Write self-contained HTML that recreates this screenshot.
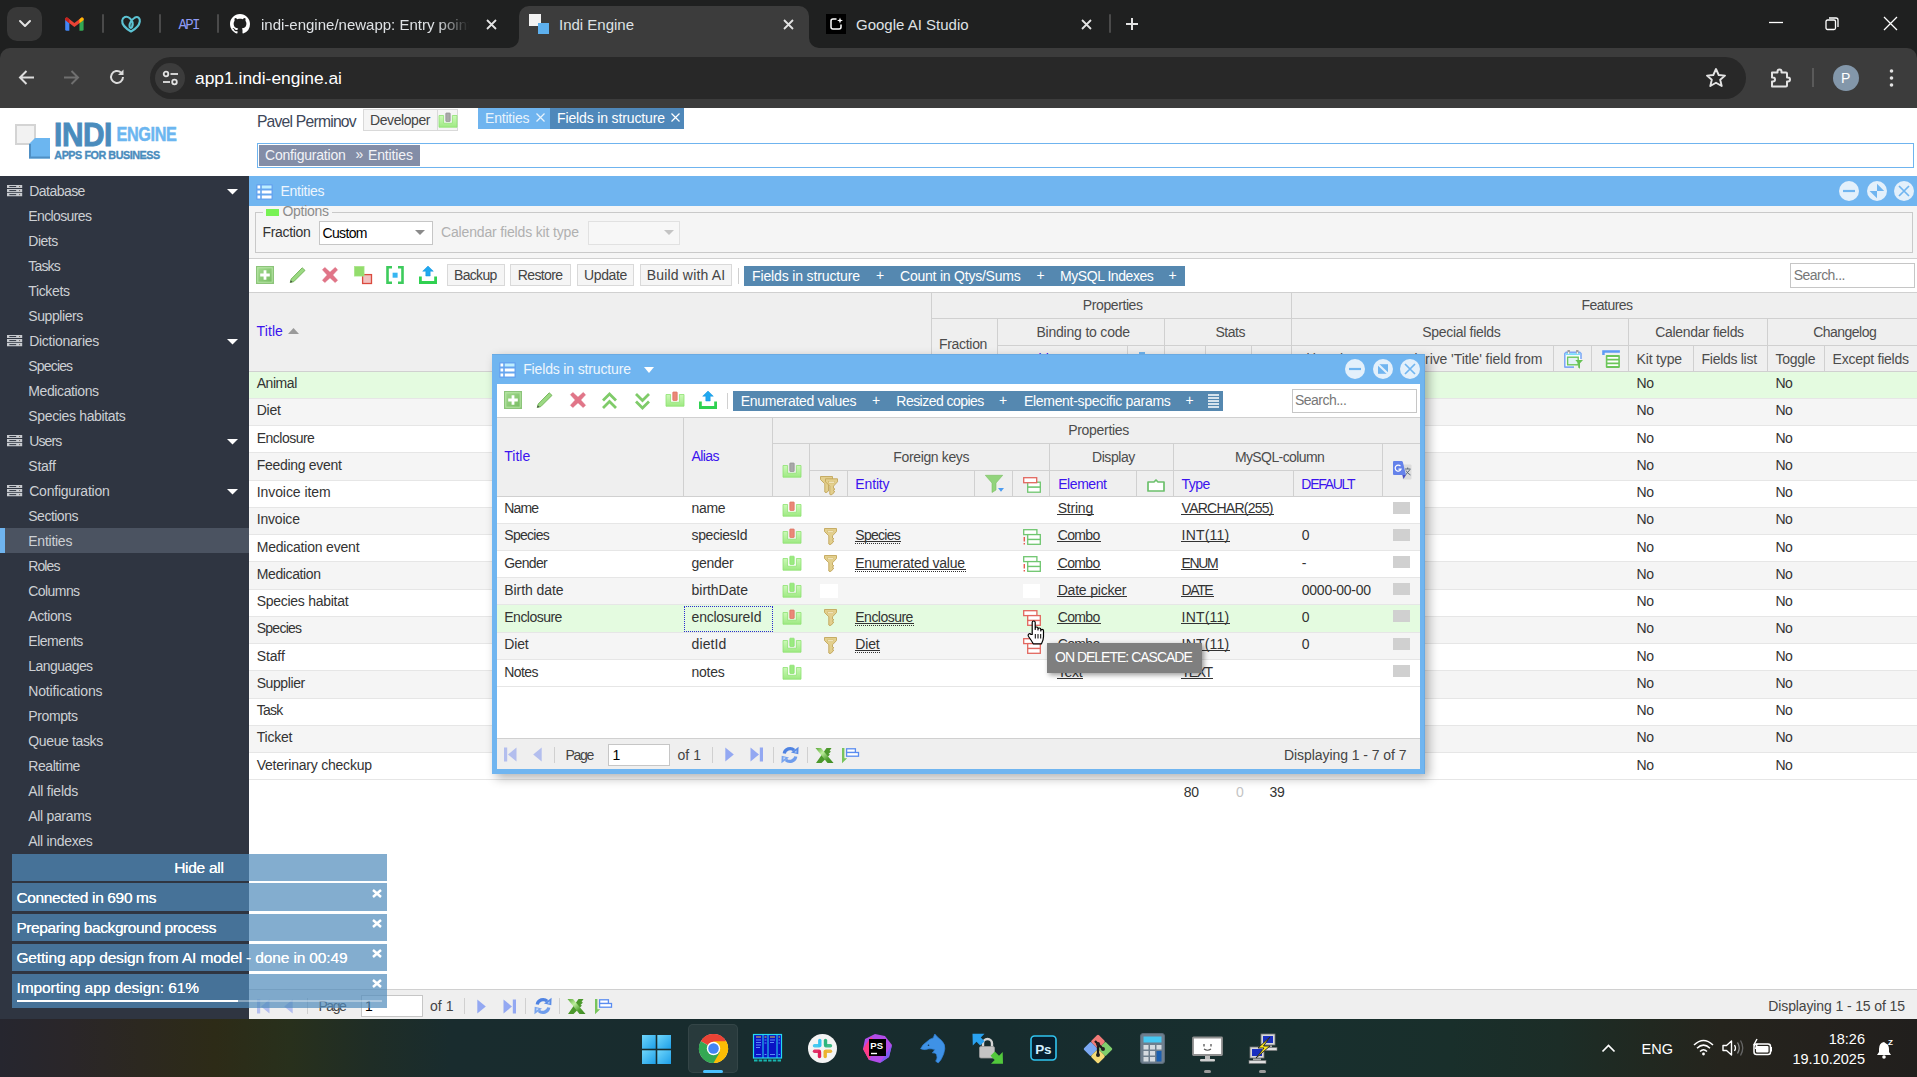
<!DOCTYPE html>
<html lang="en"><head><meta charset="utf-8"><title>Indi Engine</title>
<style>
*{box-sizing:border-box}
html,body{margin:0;padding:0}
body{width:1917px;height:1077px;overflow:hidden;position:relative;background:#fff;font-family:"Liberation Sans",sans-serif;font-size:14px;letter-spacing:-.45px;color:#333}
.a{position:absolute}
.t{position:absolute;white-space:nowrap;line-height:18px;height:18px;font-size:14px}
svg{position:absolute;overflow:visible}
/* chrome */
#chrome{left:0;top:0;width:1917px;height:108px;background:#1f2020;letter-spacing:0}
#chrome .t{color:#dfe2e5;font-size:15px}
#tb{left:0;top:48px;width:1917px;height:60px;background:#3c3c3c;border-radius:10px 10px 0 0}
#url{left:150px;top:57px;width:1596px;height:42px;border-radius:21px;background:#282828}
#acttab{left:519px;top:6px;width:290px;height:43px;background:#3c3c3c;border-radius:10px 10px 0 0}
.vs{position:absolute;width:2px;height:19px;top:14px;background:#4a4a4a;border-radius:1px}
/* sidebar */
#side{left:0;top:176px;width:249px;height:843px;background:#2f3541}
#side .t{color:#cdd0d4}
/* generic */
.btn{position:absolute;background:#f5f5f5;border:1px solid #d9d9d9;height:22px;top:264px}
.hl{position:absolute;height:1px;background:#d0d0d0}
.vl{position:absolute;width:1px;background:#d0d0d0}
.hd{color:#4c4c4c}
.bl{color:#3b14ee}
.u{text-decoration:underline;text-underline-offset:1.500px;text-decoration-thickness:1px}
.ud{border-bottom:1px dotted #333;height:17.300px}
.wt{color:#fff}
</style></head><body>
<svg width="0" height="0" style="left:-10px;top:-10px"><defs>
<linearGradient id="gG" x1="0" y1="0" x2="0" y2="1"><stop offset="0" stop-color="#ccf9b8"/><stop offset="1" stop-color="#9ee982"/></linearGradient>
<linearGradient id="gA" x1="0" y1="0" x2="1" y2="1"><stop offset="0" stop-color="#a6dc92"/><stop offset="1" stop-color="#74b95f"/></linearGradient>
<symbol id="i-grp" viewBox="0 0 15 12" overflow="visible"><path d="M0 1.550H15.200M0 5.600H15.200M0 9.650H15.200" stroke="#c6c9ce" stroke-width="3.100"/><path d="M2.300 1.550H9.200M2.300 5.600H9.200M2.300 9.650H9.200" stroke="#2f3541" stroke-width="1"/><path d="M12.100 1.550H13.100M12.100 5.600H13.100M12.100 9.650H13.100" stroke="#6a5a4a" stroke-width="1"/></symbol>
<symbol id="i-tray" viewBox="0 0 18 17" overflow="visible"><path d="M0 3.500H4.600V11.200H13.400V3.500H18V15.200H0Z" fill="url(#gG)" stroke="#8ee272" stroke-width=".8"/><rect x="6.800" y="1.200" width="4.400" height="8.300" rx=".6" fill="#9aeb80" stroke="#86de6c" stroke-width=".7"/></symbol>
<symbol id="i-tray-red" viewBox="0 0 18 17" overflow="visible"><path d="M0 3.500H4.600V11.200H13.400V3.500H18V15.200H0Z" fill="url(#gG)" stroke="#8ee272" stroke-width=".8"/><rect x="6.800" y="1" width="4.400" height="8.500" rx=".6" fill="#ea8878" stroke="#dd6d5c" stroke-width=".7"/></symbol>
<symbol id="i-tray-gray" viewBox="0 0 18 17" overflow="visible"><path d="M0 3.500H4.600V11.200H13.400V3.500H18V15.200H0Z" fill="url(#gG)" stroke="#8ee272" stroke-width=".8"/><rect x="6.800" y="1" width="4.400" height="8.500" rx=".6" fill="#a9a9a9" stroke="#8e8e8e" stroke-width=".7"/></symbol>
<symbol id="i-add" viewBox="0 0 18 18" overflow="visible"><rect x=".5" y=".5" width="17" height="17" fill="url(#gA)" stroke="#8cc47a" stroke-width="1"/><rect x="1.800" y="1.800" width="14.400" height="14.400" fill="none" stroke="#b9e6a8" stroke-width="1"/><path d="M9 4.200V13.800M4.200 9H13.800" stroke="#fff" stroke-width="2.800"/></symbol>
<symbol id="i-pencil" viewBox="0 0 18 18" overflow="visible"><path d="M1.200 16.600L2.200 13L13.200 1.800L16 4.400L4.800 15.600Z" fill="#9bd982" stroke="#6fb055" stroke-width=".9" stroke-linejoin="round"/><path d="M1.200 16.600L1.800 14.300L3.500 16Z" fill="#444"/></symbol>
<symbol id="i-x" viewBox="0 0 16 16" overflow="visible"><path d="M2.800.5L8 5.300L13.200.5L15.500 2.800L10.700 8L15.500 13.200L13.200 15.500L8 10.700L2.800 15.500L.5 13.200L5.300 8L.5 2.800Z" fill="#e17588" stroke="#d96478" stroke-width=".6" stroke-linejoin="round"/></symbol>
<symbol id="i-copy" viewBox="0 0 18 18" overflow="visible"><rect x="8.600" y="8.600" width="8.900" height="8.900" fill="#f1c1c1" stroke="#db4a3e" stroke-width="1.300"/><rect x=".3" y=".3" width="9.800" height="9.800" fill="#93dd6c" stroke="#a8e58a" stroke-width=".6"/></symbol>
<symbol id="i-brk" viewBox="0 0 18 18" overflow="visible"><path d="M6 1.200H1.500V16.800H6M12 1.200H16.500V16.800H12" fill="none" stroke="#3dcb5c" stroke-width="2.600"/><rect x="6.600" y="6.700" width="5" height="5" fill="#37b6f2"/></symbol>
<symbol id="i-upload" viewBox="0 0 18 18" overflow="visible"><path d="M1.400 10.600V16.500H16.600V10.600" fill="none" stroke="#30d151" stroke-width="2.800"/><path d="M9 0L14.300 5.200H11.200V10H6.800V5.200H3.700Z" fill="#1fa8f0" stroke="#1592dc" stroke-width=".5"/></symbol>
<symbol id="i-up2" viewBox="0 0 15 18" overflow="visible"><path d="M1 8.500L7.500 2L14 8.500M1 16L7.500 9.500L14 16" fill="none" stroke="#7fcb69" stroke-width="2.800" stroke-linejoin="miter"/></symbol>
<symbol id="i-down2" viewBox="0 0 15 18" overflow="visible"><path d="M1 2L7.500 8.500L14 2M1 9.500L7.500 16L14 9.500" fill="none" stroke="#7fcb69" stroke-width="2.800" stroke-linejoin="miter"/></symbol>
<symbol id="i-key" viewBox="0 0 13 17" overflow="visible"><path d="M.5.500H12.500V3.500L8.500 7.800V10L10 10.800L8.500 11.600V12.500L10 13.300L8.500 14.300V15L6 16.700L4.800 16V7.800L.5 3.500Z" fill="#e3cf8d" stroke="#c2a65a" stroke-width=".9" stroke-linejoin="round"/><rect x="3.600" y="3" width="5.800" height="1.700" fill="#fbf5d8" stroke="#cbb162" stroke-width=".5"/></symbol>
<symbol id="i-keys" viewBox="0 0 18 19" overflow="visible"><g transform="translate(0,0)"><path d="M.5.500H12.500V3.500L8.500 7.800V15L6 16.700L4.800 16V7.800L.5 3.500Z" fill="#e3cf8d" stroke="#c2a65a" stroke-width=".9" stroke-linejoin="round"/></g><g transform="translate(5,2.300)"><path d="M.5.500H12.500V3.500L8.500 7.800V10L10 10.800L8.500 11.600V12.500L10 13.300L8.500 14.300V15L6 16.700L4.800 16V7.800L.5 3.500Z" fill="#e3cf8d" stroke="#c2a65a" stroke-width=".9" stroke-linejoin="round"/><rect x="3.600" y="3" width="5.800" height="1.700" fill="#fbf5d8" stroke="#cbb162" stroke-width=".5"/></g></symbol>
<symbol id="i-tree-g" viewBox="0 0 18 16" overflow="visible"><g fill="#fff" stroke="#6fc66f" stroke-width="1.300"><rect x=".7" y=".7" width="13.200" height="4.900"/><rect x="4.700" y="5.600" width="12.600" height="4.900"/><rect x="4.700" y="10.500" width="12.600" height="4.800"/></g><path d="M1.300 8V12.500M1.300 14V15.600" stroke="#e65a50" stroke-width="1.400"/></symbol>
<symbol id="i-tree-r" viewBox="0 0 18 16" overflow="visible"><g fill="#fff" stroke="#e2675f" stroke-width="1.300"><rect x=".7" y=".7" width="13.200" height="4.900"/><rect x="4.700" y="5.600" width="12.600" height="4.900"/><rect x="4.700" y="10.500" width="12.600" height="4.800"/></g></symbol>
<symbol id="i-tree-h" viewBox="0 0 18 16" overflow="visible"><g fill="#fff" stroke="#6fc66f" stroke-width="1.300"><rect x="4.700" y="5.200" width="12.600" height="5"/><rect x="4.700" y="10.200" width="12.600" height="5"/></g><rect x=".7" y=".7" width="13" height="5" fill="#fff" stroke="#e2675f" stroke-width="1.300"/></symbol>
<symbol id="i-filter" viewBox="0 0 19 18" overflow="visible"><path d="M.3.300H17.700L11 8V15L7 17.500V8Z" fill="#92d47c" stroke="#78c060" stroke-width=".6" stroke-linejoin="round"/><path d="M13 13H19L16 16.700Z" fill="#4d9cf0"/></symbol>
<symbol id="i-shape" viewBox="0 0 18 13" overflow="visible"><path d="M1 3H7L9 1L11 3H17V12H1Z" fill="#fff" stroke="#6cc06c" stroke-width="1.700" stroke-linejoin="round"/></symbol>
<symbol id="i-gtr" viewBox="0 0 19 19" overflow="visible"><rect x="9.500" y="3.500" width="9" height="15" rx="1" fill="#dcdcdc"/><path d="M12 8H17.500M14.700 6.500V8M12.500 14L17 8.500M13 9.500Q14.500 12.500 17.500 14" fill="none" stroke="#506070" stroke-width=".9"/><path d="M1 0H8.500Q9.500 0 9.800 1L13 14H1Q0 14 0 13V1Q0 0 1 0Z" fill="#6582ea"/><path d="M9.300 14H13L10.500 18Z" fill="#4a4fc0"/><path d="M7.500 5.200A3 3 0 1 0 8 8.200H5.500" fill="none" stroke="#fff" stroke-width="1.200"/></symbol>
<symbol id="i-first" viewBox="0 0 13 15" overflow="visible"><rect x="0" y=".5" width="3.200" height="14" fill="#b3beee"/><path d="M12.500.5V14.500L4 7.500Z" fill="#b3beee"/></symbol>
<symbol id="i-prev" viewBox="0 0 9 15" overflow="visible"><path d="M8.700.5V14.500L.2 7.500Z" fill="#b3beee"/></symbol>
<symbol id="i-next" viewBox="0 0 9 15" overflow="visible"><path d="M.3.500V14.500L8.800 7.500Z" fill="#93a8f2"/></symbol>
<symbol id="i-last" viewBox="0 0 13 15" overflow="visible"><rect x="9.800" y=".5" width="3.200" height="14" fill="#93a8f2"/><path d="M.5.500V14.500L9 7.500Z" fill="#93a8f2"/></symbol>
<symbol id="i-refresh" viewBox="0 0 18 18" overflow="visible"><path d="M3.200 7.500A6 6 0 0 1 13.200 4.200" fill="none" stroke="#4f83e2" stroke-width="3.200"/><path d="M10 6.600L17.300 8.200L17.600 .8Z" fill="#5a8ce6"/><path d="M13.300 6.200L15.500 6.700L15.600 4.300Z" fill="#b8d3fa"/><path d="M14.800 10.500A6 6 0 0 1 4.800 13.800" fill="none" stroke="#6f9dec" stroke-width="3.200"/><path d="M8 11.400L.7 9.800L.4 17.200Z" fill="#7aa5ee"/><path d="M4.700 11.800L2.500 11.300L2.400 13.700Z" fill="#d0e2fc"/></symbol>
<symbol id="i-excel" viewBox="0 0 18 16" overflow="visible"><linearGradient id="gX" x1="0" y1="0" x2="1" y2="1"><stop offset="0" stop-color="#5aa838"/><stop offset=".35" stop-color="#bdee9c"/><stop offset=".7" stop-color="#4f9e2e"/><stop offset="1" stop-color="#3f8a24"/></linearGradient><path d="M11.500 0H16.500L14.500 3L16 3.500L13.500 6L15 6.500L6.500 15H1Z" fill="#4c982c"/><path d="M.5 0H6L18.500 15H12.500Z" fill="url(#gX)"/></symbol>
<symbol id="i-flag" viewBox="0 0 17 16" overflow="visible"><path d="M0 0H2.400V10.200H5.200L0 15.200Z" fill="#78c45c"/><rect x="4.600" y=".8" width="8.800" height="3.700" fill="#fff" stroke="#5a8cf0" stroke-width="1.300"/><rect x="4.600" y="4.500" width="11.900" height="3.700" fill="#fff" stroke="#5a8cf0" stroke-width="1.300"/></symbol>
<symbol id="i-list" viewBox="0 0 17 16" overflow="visible"><rect x="0" y="0" width="17" height="16" rx="1.500" fill="#5e97ee" opacity=".55"/><path d="M1.500 3H4.200M1.500 8H4.200M1.500 13H4.200" stroke="#fff" stroke-width="3"/><path d="M5.800 3H15.500" stroke="#bfeeff" stroke-width="3"/><path d="M5.800 8H15.500M5.800 13H15.500" stroke="#fff" stroke-width="3"/></symbol>
<symbol id="i-cmin" viewBox="0 0 20 20" overflow="visible"><circle cx="10" cy="10" r="10" fill="#e3f0fb"/><path d="M4 10H16" stroke="#70b5f0" stroke-width="2.200"/></symbol>
<symbol id="i-cclose" viewBox="0 0 20 20" overflow="visible"><circle cx="10" cy="10" r="10" fill="#e3f0fb"/><path d="M5 5L15 15M15 5L5 15" stroke="#70b5f0" stroke-width="1.700"/></symbol>
<symbol id="i-cplus" viewBox="0 0 20 20" overflow="visible"><circle cx="10" cy="10" r="10" fill="#e3f0fb"/><path d="M10 2.800L17.200 10H10ZM2.600 10H10V17.200Z" fill="#70b5f0"/></symbol>
<symbol id="i-crest" viewBox="0 0 20 20" overflow="visible"><circle cx="10" cy="10" r="10" fill="#e3f0fb"/><rect x="5" y="5.200" width="10" height="9.600" fill="#70b5f0"/><path d="M4.500 4.700L15.500 15.300" stroke="#e3f0fb" stroke-width="2.200"/></symbol>
<symbol id="i-cal" viewBox="0 0 20 20" overflow="visible"><path d="M18 10V4.500L16.500 3.200H3.500L1.800 4.700V18.100H11" fill="#fff" stroke="#7fa8f5" stroke-width="1.600" stroke-linejoin="round"/><path d="M2.500 5.100H17.300" stroke="#7fdcfb" stroke-width="2"/><path d="M5.700 1V4.500M14.300 1V4.500" stroke="#a0a0a0" stroke-width="2.400"/><path d="M5.700 3V5M14.300 3V5" stroke="#fff" stroke-width="1"/><rect x="4.600" y="8.200" width="10.600" height="7.600" fill="#e4f3f6" stroke="#6cc65a" stroke-width="1.400"/><path d="M12.300 11H20L17 14.300V19.800L15.200 18.600V14.300Z" fill="#66c253"/></symbol>
<symbol id="i-list2" viewBox="0 0 20 20" overflow="visible"><path d="M1.200 6.100V1.200H18.900V3.800H3.700V6.100Z" fill="#5f9bf5"/><rect x="4.800" y="6.100" width="14.100" height="12.800" rx=".8" fill="#6cc65a"/><path d="M6.400 8.900H17.300M6.400 12.500H17.300M6.400 16.100H17.300" stroke="#fff" stroke-width="1.800"/></symbol>
</defs></svg>
<div id="chrome" class="a">
 <div id="tb" class="a"></div>
 <div id="acttab" class="a"></div>
 <svg style="left:509px;top:38px" width="10" height="10"><path d="M10 0V10H0A10 10 0 0 0 10 0Z" fill="#3c3c3c"/></svg>
 <svg style="left:809px;top:38px" width="10" height="10"><path d="M0 0V10H10A10 10 0 0 1 0 0Z" fill="#3c3c3c"/></svg>
 <div class="a" style="left:7px;top:7px;width:35px;height:34px;border-radius:10px;background:#383838"></div>
 <svg style="left:18px;top:19px" width="14" height="10"><path d="M2 2L7 7L12 2" fill="none" stroke="#e3e3e3" stroke-width="2" stroke-linecap="round" stroke-linejoin="round"/></svg>
 <!-- gmail -->
 <svg style="left:64.500px;top:17px" width="18.800" height="13.800" viewBox="0 0 20 15"><path d="M0 2.2V13.5Q0 15 1.5 15H4.5V6.5Z" fill="#4285f4"/><path d="M20 2.2V13.5Q20 15 18.500 15H15.500V6.500Z" fill="#34a853"/><path d="M0 2.2Q0 0 2.2 0.600L10 6.500L17.800 0.600Q20 0 20 2.200V3.200L10 10.800L0 3.200Z" fill="#ea4335"/><path d="M15.500 6.700L20 3.200V2.200Q20 0 17.800 0.600L15.500 2.400Z" fill="#fbbc04"/><path d="M4.500 6.700L0 3.200V2.200Q0 0 2.200 0.600L4.500 2.400Z" fill="#c5221f"/></svg>
 <div class="vs" style="left:102px"></div>
 <!-- godaddy-ish -->
 <svg style="left:121px;top:15px" width="20" height="18" viewBox="0 0 20 18"><path d="M10 16.500C4 13 0.800 9 1.200 5.500C1.600 2 5.500 0.500 8.500 3C11 5 12.500 8.500 11 12C10.200 13.500 8.500 13 8.500 11C8.500 8 11 4.500 14 2.500C17 1 19.200 3.500 18.800 6.500C18.300 10.500 14.500 14 10 16.500Z" fill="none" stroke="#5cc3d3" stroke-width="2.100" stroke-linejoin="round"/></svg>
 <div class="vs" style="left:159px"></div>
 <div class="t" style="left:178.500px;top:16px;font:14px/18px 'Liberation Mono',monospace;letter-spacing:-1.700px;color:#8f9bf5">API</div>
 <div class="vs" style="left:217px"></div>
 <!-- github -->
 <svg style="left:230px;top:14px" width="20" height="20" viewBox="0 0 16 16"><path fill="#fff" d="M8 0C3.580 0 0 3.580 0 8c0 3.540 2.290 6.530 5.470 7.590.4.070.55-.17.550-.38 0-.19-.01-.82-.01-1.490-2.010.37-2.530-.49-2.690-.94-.09-.23-.48-.94-.82-1.130-.28-.15-.68-.52-.01-.53.630-.01 1.080.58 1.230.82.720 1.210 1.870.87 2.330.66.070-.52.280-.87.510-1.070-1.780-.2-3.640-.89-3.640-3.950 0-.87.310-1.590.820-2.150-.08-.2-.360-1.020.080-2.120 0 0 .670-.21 2.200.820.640-.18 1.320-.27 2-.27s1.360.09 2 .27c1.530-1.040 2.200-.820 2.200-.820.440 1.100.160 1.920.080 2.120.510.560.820 1.270.820 2.150 0 3.070-1.870 3.750-3.650 3.950.290.250.540.730.540 1.480 0 1.070-.01 1.930-.01 2.200 0 .21.150.46.550.38A8.010 8.010 0 0 0 16 8c0-4.420-3.580-8-8-8z"/></svg>
 <div class="t" style="left:261px;top:15.700px;width:208px;overflow:hidden;-webkit-mask-image:linear-gradient(90deg,#000 85%,transparent)">indi-engine/newapp: Entry point</div>
 <svg style="left:486px;top:19px" width="11" height="11"><path d="M1 1L10 10M10 1L1 10" stroke="#e3e3e3" stroke-width="1.800"/></svg>
 <!-- active tab -->
 <div class="a" style="left:529px;top:14px;width:12px;height:12px;background:#f2f2f2"></div>
 <div class="a" style="left:538px;top:23px;width:11px;height:11px;background:#5db0ee"></div>
 <div class="t" style="left:559px;top:15.700px">Indi Engine</div>
 <svg style="left:783px;top:19px" width="11" height="11"><path d="M1 1L10 10M10 1L1 10" stroke="#e3e3e3" stroke-width="1.800"/></svg>
 <!-- google ai studio -->
 <div class="a" style="left:825.500px;top:14px;width:20px;height:20px;background:#000"></div>
 <svg style="left:828.500px;top:17px" width="14" height="14" viewBox="0 0 14 14"><path d="M7.500 2H4Q2 2 2 4V10Q2 12 4 12H10Q12 12 12 10V7.500" fill="none" stroke="#fff" stroke-width="1.500"/><path d="M11 0.500L11.800 2.700L14 3.500L11.800 4.300L11 6.500L10.200 4.300L8 3.500L10.200 2.700Z" fill="#fff"/></svg>
 <div class="t" style="left:856px;top:15.700px">Google AI Studio</div>
 <svg style="left:1081px;top:19px" width="11" height="11"><path d="M1 1L10 10M10 1L1 10" stroke="#e3e3e3" stroke-width="1.800"/></svg>
 <div class="vs" style="left:1109px"></div>
 <svg style="left:1125px;top:17px" width="14" height="14"><path d="M7 1V13M1 7H13" stroke="#e3e3e3" stroke-width="2"/></svg>
 <!-- window controls -->
 <svg style="left:1769px;top:21px" width="15" height="3"><path d="M0 1.500H14" stroke="#fff" stroke-width="1.300"/></svg>
 <svg style="left:1825px;top:16px" width="15" height="15"><rect x="1" y="4" width="9.500" height="9.500" rx="1.500" fill="none" stroke="#fff" stroke-width="1.300"/><path d="M4 2H11Q13 2 13 4V11" fill="none" stroke="#fff" stroke-width="1.300"/></svg>
 <svg style="left:1883px;top:16px" width="15" height="15"><path d="M1 1L14 14M14 1L1 14" stroke="#fff" stroke-width="1.300"/></svg>
 <!-- toolbar -->
 <svg style="left:18px;top:69px" width="17" height="17"><path d="M16 8.500H2.500M8.500 2L2 8.500L8.500 15" fill="none" stroke="#dcdcdc" stroke-width="2"/></svg>
 <svg style="left:63px;top:69px" width="17" height="17"><path d="M1 8.500H14.500M8.500 2L15 8.500L8.500 15" fill="none" stroke="#6f6f6f" stroke-width="2"/></svg>
 <svg style="left:108px;top:68px" width="18" height="18" viewBox="0 0 18 18"><path d="M15 9A6 6 0 1 1 13 4.500" fill="none" stroke="#dcdcdc" stroke-width="2"/><path d="M15.500 1.500V7H10Z" fill="#dcdcdc"/></svg>
 <div id="url" class="a"></div>
 <div class="a" style="left:155px;top:63px;width:30px;height:30px;border-radius:15px;background:#3c3c3c"></div>
 <svg style="left:162px;top:70px" width="17" height="16" viewBox="0 0 17 16"><circle cx="4" cy="4" r="2.300" fill="none" stroke="#e3e3e3" stroke-width="1.800"/><path d="M8.500 4H16" stroke="#e3e3e3" stroke-width="1.800"/><circle cx="12.500" cy="12" r="2.300" fill="none" stroke="#e3e3e3" stroke-width="1.800"/><path d="M1 12H8" stroke="#e3e3e3" stroke-width="1.800"/></svg>
 <div class="t" style="left:195px;top:67px;font-size:17.400px;line-height:22px;height:22px;color:#fff">app1.indi-engine.ai</div>
 <svg style="left:1705px;top:67px" width="22" height="21" viewBox="0 0 22 21"><path d="M11 2L13.700 8L20 8.600L15.200 12.800L16.700 19L11 15.700L5.300 19L6.800 12.800L2 8.600L8.300 8Z" fill="none" stroke="#e3e3e3" stroke-width="1.900" stroke-linejoin="round"/></svg>
 <svg style="left:1769px;top:66px" width="23" height="23" viewBox="0 0 23 23"><path d="M3 6.500H8.500V5.500A2 2 0 0 1 12.500 5.500V6.500H17Q18 6.500 18 7.500V11.500H19A2 2 0 0 1 19 15.500H18V19.500Q18 20.500 17 20.500H3V15.500H4A2 2 0 0 0 4 11.500H3Z" fill="none" stroke="#e3e3e3" stroke-width="2" stroke-linejoin="round"/></svg>
 <div class="a" style="left:1812px;top:68px;width:2px;height:19px;background:#5a5a5a"></div>
 <div class="a" style="left:1833px;top:65px;width:26px;height:26px;border-radius:13px;background:#8397aa"></div>
 <div class="t" style="left:1841px;top:69px;font-size:14px;color:#fff">P</div>
 <svg style="left:1889px;top:68px" width="5" height="20"><circle cx="2.500" cy="3" r="1.800" fill="#e3e3e3"/><circle cx="2.500" cy="10" r="1.800" fill="#e3e3e3"/><circle cx="2.500" cy="17" r="1.800" fill="#e3e3e3"/></svg>
</div>
<!-- logo -->
<div class="a" style="left:15px;top:124px;width:21px;height:21px;background:#f2f2f2;border:2px solid #d4d4d4"></div>
<svg style="left:29px;top:138px" width="21" height="21"><path d="M6 0H21V20.500H0V6Z" fill="#6cb6f0"/><path d="M1 6V19.500H21" fill="none" stroke="#4f8fc4" stroke-width="2"/></svg>
<svg style="left:54px;top:118px" width="130" height="44" viewBox="0 0 130 44">
 <text x="0" y="28" font-family="Liberation Sans, sans-serif" font-weight="bold" font-size="33.500" fill="#4a8cbd" stroke="#4a8cbd" stroke-width="1" textLength="58" lengthAdjust="spacingAndGlyphs">INDI</text>
 <text x="62.500" y="23.400" font-family="Liberation Sans, sans-serif" font-weight="bold" font-size="20" fill="#6cb6f0" stroke="#6cb6f0" stroke-width=".5" textLength="60" lengthAdjust="spacingAndGlyphs">ENGINE</text>
 <text x="0.300" y="40.700" font-family="Liberation Sans, sans-serif" font-weight="bold" font-size="11" fill="#4a8cbd" stroke="#4a8cbd" stroke-width=".35" textLength="105.500" lengthAdjust="spacingAndGlyphs">APPS FOR BUSINESS</text>
</svg>
<div class="t " style="top:112.56px;font-size:15.7px;letter-spacing:-0.78px;color:#3d4759;left:256.9px;">Pavel Perminov</div>
<div class="a" style="left:363px;top:109px;width:95px;height:22px;background:#f5f5f5;border:1px solid #d9d9d9"></div>
<div class="t " style="top:111.3px;letter-spacing:-0.41px;color:#444;left:370px;">Developer</div>
<div class="vl" style="left:437px;top:110px;height:20px;background:#d9d9d9"></div>
<svg style="left:438.8px;top:111.7px" width="18" height="17"><use href="#i-tray-gray"/></svg>
<div class="a" style="left:477.5px;top:108px;width:72px;height:20.5px;background:#6fb4ef;"></div>
<div class="a" style="left:549.5px;top:108px;width:134.5px;height:20.5px;background:#4f88ba;"></div>
<div class="t " style="top:108.8px;letter-spacing:-0.20px;color:#e8f3fc;left:485px;">Entities</div>
<svg style="left:536px;top:113px" width="9" height="9"><path d="M.5.5L8.500 8.500M8.500.5L.5 8.500" stroke="#e8f3fc" stroke-width="1.200"/></svg>
<div class="t " style="top:108.8px;letter-spacing:-0.14px;color:#fff;left:557px;">Fields in structure</div>
<svg style="left:671px;top:113px" width="9" height="9"><path d="M.5.5L8.500 8.500M8.500.5L.5 8.500" stroke="#fff" stroke-width="1.200"/></svg>
<div class="a" style="left:257px;top:143px;width:1656.5px;height:24.5px;background:#fff;border:1px solid #6fb4ef"></div>
<div class="a" style="left:259px;top:145px;width:160.5px;height:20.5px;background:#838da7;"></div>
<div class="t " style="top:146.2px;letter-spacing:-0.21px;color:#f2f3f7;left:265px;">Configuration</div>
<div class="t " style="top:145.3px;letter-spacing:0.00px;color:#f2f3f7;left:355.5px;">»</div>
<div class="t " style="top:146.2px;letter-spacing:-0.13px;color:#f2f3f7;left:368px;">Entities</div>
<div id="side" class="a">
<div class="a" style="left:0px;top:352px;width:249px;height:25px;background:#4b5361;"></div><div class="a" style="left:0px;top:352px;width:5px;height:25px;background:#6fb4ef;"></div>
<svg style="left:6.9px;top:8.9px" width="15" height="12"><use href="#i-grp"/></svg>
<div class="t " style="top:6.15px;letter-spacing:-0.53px;left:29.2px;">Database</div>
<svg style="left:226.500px;top:12.5px" width="11" height="5.500"><path d="M0 0H11L5.500 5.500Z" fill="#fff"/></svg>
<div class="t " style="top:31.15px;letter-spacing:-0.62px;left:28.3px;">Enclosures</div>
<div class="t " style="top:56.15px;letter-spacing:-0.50px;left:28.3px;">Diets</div>
<div class="t " style="top:81.15px;letter-spacing:-0.82px;left:28.3px;">Tasks</div>
<div class="t " style="top:106.15px;letter-spacing:-0.37px;left:28.3px;">Tickets</div>
<div class="t " style="top:131.15px;letter-spacing:-0.43px;left:28.3px;">Suppliers</div>
<svg style="left:6.9px;top:158.9px" width="15" height="12"><use href="#i-grp"/></svg>
<div class="t " style="top:156.15px;letter-spacing:-0.27px;left:29.2px;">Dictionaries</div>
<svg style="left:226.500px;top:162.5px" width="11" height="5.500"><path d="M0 0H11L5.500 5.500Z" fill="#fff"/></svg>
<div class="t " style="top:181.15px;letter-spacing:-0.83px;left:28.3px;">Species</div>
<div class="t " style="top:206.15px;letter-spacing:-0.39px;left:28.3px;">Medications</div>
<div class="t " style="top:231.15px;letter-spacing:-0.35px;left:28.3px;">Species habitats</div>
<svg style="left:6.9px;top:258.9px" width="15" height="12"><use href="#i-grp"/></svg>
<div class="t " style="top:256.15px;letter-spacing:-0.86px;left:29.2px;">Users</div>
<svg style="left:226.500px;top:262.5px" width="11" height="5.500"><path d="M0 0H11L5.500 5.500Z" fill="#fff"/></svg>
<div class="t " style="top:281.15px;letter-spacing:-0.23px;left:28.3px;">Staff</div>
<svg style="left:6.9px;top:308.9px" width="15" height="12"><use href="#i-grp"/></svg>
<div class="t " style="top:306.15px;letter-spacing:-0.22px;left:29.2px;">Configuration</div>
<svg style="left:226.500px;top:312.5px" width="11" height="5.500"><path d="M0 0H11L5.500 5.500Z" fill="#fff"/></svg>
<div class="t " style="top:331.15px;letter-spacing:-0.51px;left:28.3px;">Sections</div>
<div class="t " style="top:356.15px;letter-spacing:-0.26px;left:28.3px;">Entities</div>
<div class="t " style="top:381.15px;letter-spacing:-0.92px;left:28.3px;">Roles</div>
<div class="t " style="top:406.15px;letter-spacing:-0.57px;left:28.3px;">Columns</div>
<div class="t " style="top:431.15px;letter-spacing:-0.42px;left:28.3px;">Actions</div>
<div class="t " style="top:456.15px;letter-spacing:-0.47px;left:28.3px;">Elements</div>
<div class="t " style="top:481.15px;letter-spacing:-0.56px;left:28.3px;">Languages</div>
<div class="t " style="top:506.15px;letter-spacing:-0.17px;left:28.3px;">Notifications</div>
<div class="t " style="top:531.15px;letter-spacing:-0.39px;left:28.3px;">Prompts</div>
<div class="t " style="top:556.15px;letter-spacing:-0.37px;left:28.3px;">Queue tasks</div>
<div class="t " style="top:581.15px;letter-spacing:-0.45px;left:28.3px;">Realtime</div>
<div class="t " style="top:606.15px;letter-spacing:-0.23px;left:28.3px;">All fields</div>
<div class="t " style="top:631.15px;letter-spacing:-0.33px;left:28.3px;">All params</div>
<div class="t " style="top:656.15px;letter-spacing:-0.32px;left:28.3px;">All indexes</div>
</div>
<div class="a" style="left:249px;top:176px;width:1668px;height:29.5px;background:#70b5f0;"></div>
<svg style="left:255.5px;top:183.5px" width="17" height="16"><use href="#i-list"/></svg>
<div class="t " style="top:182.3px;letter-spacing:-0.27px;color:#eef6fd;left:280.5px;">Entities</div>
<svg style="left:1839px;top:181px" width="20" height="20"><use href="#i-cmin"/></svg>
<svg style="left:1867px;top:181px" width="20" height="20"><use href="#i-cplus"/></svg>
<svg style="left:1894px;top:181px" width="20" height="20"><use href="#i-cclose"/></svg>
<div class="a" style="left:249px;top:205.5px;width:1668px;height:53px;background:#f5f5f5;"></div>
<div class="a" style="left:255px;top:212px;width:1658px;height:41px;border:1px solid #c9c9c9"></div>
<div class="a" style="left:263px;top:206px;width:69px;height:12px;background:#f5f5f5;"></div>
<div class="a" style="left:265.5px;top:209px;width:13.5px;height:7px;background:#78f254;"></div>
<div class="t " style="top:202.3px;letter-spacing:-0.29px;color:#8c8c8c;left:282.5px;">Options</div>
<div class="t " style="top:222.8px;letter-spacing:-0.34px;left:262.5px;">Fraction</div>
<div class="a" style="left:319px;top:221px;width:113.5px;height:23.5px;background:#fff;border:1px solid #c6c6c6"></div>
<div class="t " style="top:224.3px;letter-spacing:-0.65px;color:#000;left:322.5px;">Custom</div>
<svg style="left:415px;top:230px" width="10" height="5"><path d="M0 0H10L5 5Z" fill="#8a8a8a"/></svg>
<div class="t " style="top:222.8px;letter-spacing:-0.16px;color:#b0b0b0;left:441px;">Calendar fields kit type</div>
<div class="a" style="left:587.5px;top:221px;width:92.5px;height:23.5px;background:#f7f7f7;border:1px solid #e1e1e1"></div>
<svg style="left:663.500px;top:230px" width="10" height="5"><path d="M0 0H10L5 5Z" fill="#c4c4c4"/></svg>
<div class="hl" style="left:249px;top:258px;width:1668px"></div>
<svg style="left:256px;top:266px" width="18" height="18"><use href="#i-add"/></svg>
<svg style="left:289px;top:266px" width="18" height="18"><use href="#i-pencil"/></svg>
<svg style="left:322px;top:267px" width="16" height="16"><use href="#i-x"/></svg>
<svg style="left:354px;top:266px" width="18" height="18"><use href="#i-copy"/></svg>
<svg style="left:386px;top:266px" width="18" height="18"><use href="#i-brk"/></svg>
<svg style="left:419px;top:266px" width="18" height="18"><use href="#i-upload"/></svg>
<div class="btn" style="left:446.5px;width:58px"></div><div class="t " style="top:266.3px;letter-spacing:-0.68px;color:#444;left:454px;">Backup</div>
<div class="btn" style="left:510px;width:60.5px"></div><div class="t " style="top:266.3px;letter-spacing:-0.60px;color:#444;left:517.7px;">Restore</div>
<div class="btn" style="left:576.5px;width:57px"></div><div class="t " style="top:266.3px;letter-spacing:-0.37px;color:#444;left:584px;">Update</div>
<div class="btn" style="left:639.5px;width:92.5px"></div><div class="t " style="top:266.3px;letter-spacing:0.19px;color:#444;left:646.7px;">Build with AI</div>
<div class="vl" style="left:738px;top:268px;height:16px"></div>
<div class="a" style="left:744px;top:266px;width:441px;height:20px;background:#5588b0;"></div>
<div class="t wt" style="top:266.8px;letter-spacing:-0.14px;left:752px;">Fields in structure</div>
<div class="t wt" style="top:266.8px;letter-spacing:-0.22px;left:900px;">Count in Qtys/Sums</div>
<div class="t wt" style="top:266.8px;letter-spacing:-0.44px;left:1060px;">MySQL Indexes</div>
<div class="t wt" style="top:266.3px;letter-spacing:0.00px;left:876px;">+</div>
<div class="t wt" style="top:266.3px;letter-spacing:0.00px;left:1036.5px;">+</div>
<div class="t wt" style="top:266.3px;letter-spacing:0.00px;left:1168.5px;">+</div>
<div class="a" style="left:1790px;top:263.4px;width:124.5px;height:24.2px;background:#fff;border:1px solid #c6c6c6"></div>
<div class="t " style="top:266.1px;letter-spacing:-0.53px;color:#777;left:1793.7px;">Search...</div>
<div class="a" style="left:249px;top:292px;width:1668px;height:80px;background:#efefef;border-top:1px solid #d0d0d0;border-bottom:1px solid #d0d0d0"></div>
<div class="t bl" style="top:321.8px;letter-spacing:0.09px;left:256.6px;">Title</div>
<svg style="left:288px;top:327.500px" width="11" height="6"><path d="M0 6H11L5.500 0Z" fill="#9a9a9a"/></svg>
<div class="vl" style="left:931px;top:293px;height:79px"></div>
<div class="vl" style="left:1291px;top:293px;height:79px"></div>
<div class="hl" style="left:932px;top:318px;width:985px"></div>
<div class="vl" style="left:997px;top:319px;height:53px"></div>
<div class="vl" style="left:1164px;top:319px;height:53px"></div>
<div class="vl" style="left:1628px;top:319px;height:53px"></div>
<div class="vl" style="left:1767px;top:319px;height:53px"></div>
<div class="hl" style="left:997px;top:345px;width:920px"></div>
<div class="vl" style="left:1127px;top:346px;height:26px"></div>
<div class="vl" style="left:1205px;top:346px;height:26px"></div>
<div class="vl" style="left:1251px;top:346px;height:26px"></div>
<div class="vl" style="left:1553px;top:346px;height:26px"></div>
<div class="vl" style="left:1591px;top:346px;height:26px"></div>
<div class="vl" style="left:1693px;top:346px;height:26px"></div>
<div class="vl" style="left:1824px;top:346px;height:26px"></div>
<div class="t hd" style="top:295.9px;letter-spacing:-0.40px;left:1082.8px;">Properties</div>
<div class="t hd" style="top:295.9px;letter-spacing:-0.53px;left:1581.5px;">Features</div>
<div class="t hd" style="top:322.8px;letter-spacing:-0.20px;left:1036.4px;">Binding to code</div>
<div class="t hd" style="top:322.8px;letter-spacing:-0.45px;left:1215.4px;">Stats</div>
<div class="t hd" style="top:322.8px;letter-spacing:-0.30px;left:1422.2px;">Special fields</div>
<div class="t hd" style="top:322.8px;letter-spacing:-0.32px;left:1655.2px;">Calendar fields</div>
<div class="t hd" style="top:322.8px;letter-spacing:-0.54px;left:1813.3px;">Changelog</div>
<div class="t hd" style="top:335.3px;letter-spacing:-0.31px;left:939px;">Fraction</div>
<div class="t bl" style="top:350.3px;letter-spacing:-0.45px;left:1024.5px;">Table</div>
<div class="t hd" style="top:350.3px;letter-spacing:-0.45px;left:1299px;">Title column</div>
<div class="t hd" style="top:350.3px;letter-spacing:-0.08px;left:1242.42px;width:300px;text-align:right;">Auto-derive 'Title' field from</div>
<svg style="left:1563px;top:349px" width="20" height="20"><use href="#i-cal"/></svg>
<svg style="left:1601px;top:349px" width="20" height="20"><use href="#i-list2"/></svg>
<div class="t hd" style="top:350.3px;letter-spacing:-0.18px;left:1636.6px;">Kit type</div>
<div class="t hd" style="top:350.3px;letter-spacing:-0.29px;left:1701.6px;">Fields list</div>
<div class="t hd" style="top:350.3px;letter-spacing:-0.23px;left:1775.4px;">Toggle</div>
<div class="t hd" style="top:350.3px;letter-spacing:-0.25px;left:1832.6px;">Except fields</div>
<div class="a" style="left:1139.4px;top:352px;width:5.2px;height:3px;background:#6fb4ef;"></div>
<div class="a" style="left:249px;top:372px;width:1668px;height:26px;background:#e4fbe0;"></div>
<div class="hl" style="left:249px;top:398px;width:1668px;background:#e6e6e6"></div>
<div class="t " style="top:374.15px;letter-spacing:-0.44px;left:256.7px;">Animal</div>
<div class="t " style="top:374.15px;letter-spacing:-0.45px;left:1636.6px;">No</div>
<div class="t " style="top:374.15px;letter-spacing:-0.45px;left:1775.4px;">No</div>
<div class="a" style="left:249px;top:399px;width:1668px;height:26px;background:#f5f5f5;"></div>
<div class="hl" style="left:249px;top:425px;width:1668px;background:#e6e6e6"></div>
<div class="t " style="top:401.15px;letter-spacing:-0.20px;left:256.7px;">Diet</div>
<div class="t " style="top:401.15px;letter-spacing:-0.45px;left:1636.6px;">No</div>
<div class="t " style="top:401.15px;letter-spacing:-0.45px;left:1775.4px;">No</div>
<div class="a" style="left:249px;top:426px;width:1668px;height:26px;background:#fff;"></div>
<div class="hl" style="left:249px;top:452px;width:1668px;background:#e6e6e6"></div>
<div class="t " style="top:429.15px;letter-spacing:-0.51px;left:256.7px;">Enclosure</div>
<div class="t " style="top:429.15px;letter-spacing:-0.45px;left:1636.6px;">No</div>
<div class="t " style="top:429.15px;letter-spacing:-0.45px;left:1775.4px;">No</div>
<div class="a" style="left:249px;top:453px;width:1668px;height:27px;background:#f5f5f5;"></div>
<div class="hl" style="left:249px;top:480px;width:1668px;background:#e6e6e6"></div>
<div class="t " style="top:456.15px;letter-spacing:-0.29px;left:256.7px;">Feeding event</div>
<div class="t " style="top:456.15px;letter-spacing:-0.45px;left:1636.6px;">No</div>
<div class="t " style="top:456.15px;letter-spacing:-0.45px;left:1775.4px;">No</div>
<div class="a" style="left:249px;top:481px;width:1668px;height:26px;background:#fff;"></div>
<div class="hl" style="left:249px;top:507px;width:1668px;background:#e6e6e6"></div>
<div class="t " style="top:483.15px;letter-spacing:-0.07px;left:256.7px;">Invoice item</div>
<div class="t " style="top:483.15px;letter-spacing:-0.45px;left:1636.6px;">No</div>
<div class="t " style="top:483.15px;letter-spacing:-0.45px;left:1775.4px;">No</div>
<div class="a" style="left:249px;top:508px;width:1668px;height:26px;background:#f5f5f5;"></div>
<div class="hl" style="left:249px;top:534px;width:1668px;background:#e6e6e6"></div>
<div class="t " style="top:510.15px;letter-spacing:-0.18px;left:256.7px;">Invoice</div>
<div class="t " style="top:510.15px;letter-spacing:-0.45px;left:1636.6px;">No</div>
<div class="t " style="top:510.15px;letter-spacing:-0.45px;left:1775.4px;">No</div>
<div class="a" style="left:249px;top:535px;width:1668px;height:26px;background:#fff;"></div>
<div class="hl" style="left:249px;top:561px;width:1668px;background:#e6e6e6"></div>
<div class="t " style="top:538.15px;letter-spacing:-0.20px;left:256.7px;">Medication event</div>
<div class="t " style="top:538.15px;letter-spacing:-0.45px;left:1636.6px;">No</div>
<div class="t " style="top:538.15px;letter-spacing:-0.45px;left:1775.4px;">No</div>
<div class="a" style="left:249px;top:562px;width:1668px;height:27px;background:#f5f5f5;"></div>
<div class="hl" style="left:249px;top:589px;width:1668px;background:#e6e6e6"></div>
<div class="t " style="top:565.15px;letter-spacing:-0.38px;left:256.7px;">Medication</div>
<div class="t " style="top:565.15px;letter-spacing:-0.45px;left:1636.6px;">No</div>
<div class="t " style="top:565.15px;letter-spacing:-0.45px;left:1775.4px;">No</div>
<div class="a" style="left:249px;top:590px;width:1668px;height:26px;background:#fff;"></div>
<div class="hl" style="left:249px;top:616px;width:1668px;background:#e6e6e6"></div>
<div class="t " style="top:592.15px;letter-spacing:-0.27px;left:256.7px;">Species habitat</div>
<div class="t " style="top:592.15px;letter-spacing:-0.45px;left:1636.6px;">No</div>
<div class="t " style="top:592.15px;letter-spacing:-0.45px;left:1775.4px;">No</div>
<div class="a" style="left:249px;top:617px;width:1668px;height:26px;background:#f5f5f5;"></div>
<div class="hl" style="left:249px;top:643px;width:1668px;background:#e6e6e6"></div>
<div class="t " style="top:619.15px;letter-spacing:-0.73px;left:256.7px;">Species</div>
<div class="t " style="top:619.15px;letter-spacing:-0.45px;left:1636.6px;">No</div>
<div class="t " style="top:619.15px;letter-spacing:-0.45px;left:1775.4px;">No</div>
<div class="a" style="left:249px;top:644px;width:1668px;height:26px;background:#fff;"></div>
<div class="hl" style="left:249px;top:670px;width:1668px;background:#e6e6e6"></div>
<div class="t " style="top:647.15px;letter-spacing:-0.11px;left:256.7px;">Staff</div>
<div class="t " style="top:647.15px;letter-spacing:-0.45px;left:1636.6px;">No</div>
<div class="t " style="top:647.15px;letter-spacing:-0.45px;left:1775.4px;">No</div>
<div class="a" style="left:249px;top:671px;width:1668px;height:27px;background:#f5f5f5;"></div>
<div class="hl" style="left:249px;top:698px;width:1668px;background:#e6e6e6"></div>
<div class="t " style="top:674.15px;letter-spacing:-0.41px;left:256.7px;">Supplier</div>
<div class="t " style="top:674.15px;letter-spacing:-0.45px;left:1636.6px;">No</div>
<div class="t " style="top:674.15px;letter-spacing:-0.45px;left:1775.4px;">No</div>
<div class="a" style="left:249px;top:699px;width:1668px;height:26px;background:#fff;"></div>
<div class="hl" style="left:249px;top:725px;width:1668px;background:#e6e6e6"></div>
<div class="t " style="top:701.15px;letter-spacing:-0.70px;left:256.7px;">Task</div>
<div class="t " style="top:701.15px;letter-spacing:-0.45px;left:1636.6px;">No</div>
<div class="t " style="top:701.15px;letter-spacing:-0.45px;left:1775.4px;">No</div>
<div class="a" style="left:249px;top:726px;width:1668px;height:26px;background:#f5f5f5;"></div>
<div class="hl" style="left:249px;top:752px;width:1668px;background:#e6e6e6"></div>
<div class="t " style="top:728.15px;letter-spacing:-0.20px;left:256.7px;">Ticket</div>
<div class="t " style="top:728.15px;letter-spacing:-0.45px;left:1636.6px;">No</div>
<div class="t " style="top:728.15px;letter-spacing:-0.45px;left:1775.4px;">No</div>
<div class="a" style="left:249px;top:753px;width:1668px;height:26px;background:#fff;"></div>
<div class="hl" style="left:249px;top:779px;width:1668px;background:#e6e6e6"></div>
<div class="t " style="top:756.15px;letter-spacing:-0.22px;left:256.7px;">Veterinary checkup</div>
<div class="t " style="top:756.15px;letter-spacing:-0.45px;left:1636.6px;">No</div>
<div class="t " style="top:756.15px;letter-spacing:-0.45px;left:1775.4px;">No</div>
<div class="t " style="top:783px;letter-spacing:-0.30px;left:1183.8px;">80</div>
<div class="t " style="top:783px;letter-spacing:-0.45px;color:#c4c4c4;left:1236px;">0</div>
<div class="t " style="top:783px;letter-spacing:-0.30px;left:1269.6px;">39</div>
<div class="a" style="left:249px;top:989px;width:1668px;height:30px;background:#efefef;border-top:1px solid #d0d0d0"></div>
<svg style="left:256.5px;top:998.5px" width="13" height="15"><use href="#i-first"/></svg>
<svg style="left:284px;top:998.5px" width="9" height="15"><use href="#i-prev"/></svg>
<div class="vl" style="left:307px;top:998px;height:16px"></div>
<div class="t " style="top:996.8px;letter-spacing:-1.40px;color:#444;left:318.4px;">Page</div>
<div class="a" style="left:360.5px;top:994.5px;width:62px;height:22px;background:#fff;border:1px solid #c6c6c6"></div>
<div class="t " style="top:996.8px;letter-spacing:-0.45px;color:#000;left:365px;">1</div>
<div class="t " style="top:996.8px;letter-spacing:0.05px;color:#444;left:430px;">of 1</div>
<div class="vl" style="left:464px;top:998px;height:16px"></div>
<svg style="left:477px;top:998.5px" width="9" height="15"><use href="#i-next"/></svg>
<svg style="left:502.5px;top:998.5px" width="13" height="15"><use href="#i-last"/></svg>
<div class="vl" style="left:525px;top:998px;height:16px"></div>
<svg style="left:534px;top:997px" width="18" height="18"><use href="#i-refresh"/></svg>
<div class="vl" style="left:559px;top:998px;height:16px"></div>
<svg style="left:567px;top:998.6px" width="18" height="16"><use href="#i-excel"/></svg>
<svg style="left:595.2px;top:998.5px" width="17" height="16"><use href="#i-flag"/></svg>
<div class="t " style="top:996.8px;letter-spacing:-0.12px;color:#444;left:1768.3px;">Displaying 1 - 15 of 15</div>
<div class="a" style="left:492px;top:354px;width:933px;height:420px;background:#70b5f0;box-shadow:4px 4px 10px rgba(0,0,0,.3);border-top:1px solid #69aae3;border-right:1px solid #69aae3"></div>
<div class="a" style="left:497px;top:384px;width:923px;height:385px;background:#fff;"></div>
<svg style="left:498.5px;top:361.5px" width="17" height="16"><use href="#i-list"/></svg>
<div class="t " style="top:360.3px;letter-spacing:-0.15px;color:#eef6fd;left:523.2px;">Fields in structure</div>
<svg style="left:643.500px;top:366.500px" width="10" height="6"><path d="M0 0H10L5 6Z" fill="#fff"/></svg>
<svg style="left:1345px;top:359px" width="20" height="20"><use href="#i-cmin"/></svg>
<svg style="left:1372.5px;top:359px" width="20" height="20"><use href="#i-crest"/></svg>
<svg style="left:1400px;top:359px" width="20" height="20"><use href="#i-cclose"/></svg>
<svg style="left:504px;top:391px" width="18" height="18"><use href="#i-add"/></svg>
<svg style="left:536px;top:391px" width="18" height="18"><use href="#i-pencil"/></svg>
<svg style="left:570px;top:392px" width="16" height="16"><use href="#i-x"/></svg>
<svg style="left:602px;top:391.5px" width="15" height="18"><use href="#i-up2"/></svg>
<svg style="left:635px;top:391.5px" width="15" height="18"><use href="#i-down2"/></svg>
<svg style="left:666px;top:391px" width="18" height="17"><use href="#i-tray-red"/></svg>
<svg style="left:699px;top:391px" width="18" height="18"><use href="#i-upload"/></svg>
<div class="vl" style="left:727px;top:393px;height:16px"></div>
<div class="a" style="left:733px;top:391px;width:490px;height:20px;background:#5588b0;"></div>
<div class="t wt" style="top:391.8px;letter-spacing:-0.31px;left:740.8px;">Enumerated values</div>
<div class="t wt" style="top:391.8px;letter-spacing:-0.53px;left:896.3px;">Resized copies</div>
<div class="t wt" style="top:391.8px;letter-spacing:-0.29px;left:1023.9px;">Element-specific params</div>
<div class="t wt" style="top:391.3px;letter-spacing:0.00px;left:872px;">+</div>
<div class="t wt" style="top:391.3px;letter-spacing:0.00px;left:999px;">+</div>
<div class="t wt" style="top:391.3px;letter-spacing:0.00px;left:1185.5px;">+</div>
<svg style="left:1208px;top:394px" width="11" height="14"><path d="M0 1H11M0 4H11M0 7H11M0 10H11M0 13H11" stroke="#fff" stroke-width="1.500"/></svg>
<div class="a" style="left:1292px;top:388.5px;width:124.5px;height:24px;background:#fff;border:1px solid #c6c6c6"></div>
<div class="t " style="top:390.8px;letter-spacing:-0.53px;color:#777;left:1295px;">Search...</div>
<div class="a" style="left:497px;top:417px;width:923px;height:80px;background:#efefef;border-top:1px solid #d0d0d0;border-bottom:1px solid #d0d0d0"></div>
<div class="vl" style="left:683px;top:418px;height:78px"></div>
<div class="vl" style="left:772px;top:418px;height:78px"></div>
<div class="hl" style="left:772px;top:443px;width:648px"></div>
<div class="vl" style="left:809px;top:444px;height:52px"></div>
<div class="vl" style="left:1049px;top:444px;height:52px"></div>
<div class="vl" style="left:1173px;top:444px;height:52px"></div>
<div class="vl" style="left:1382px;top:444px;height:52px"></div>
<div class="hl" style="left:809px;top:470px;width:573px"></div>
<div class="vl" style="left:847px;top:471px;height:25px"></div>
<div class="vl" style="left:974px;top:471px;height:25px"></div>
<div class="vl" style="left:1012px;top:471px;height:25px"></div>
<div class="vl" style="left:1136px;top:471px;height:25px"></div>
<div class="vl" style="left:1293px;top:471px;height:25px"></div>
<div class="t bl" style="top:447.3px;letter-spacing:-0.01px;left:504.3px;">Title</div>
<div class="t bl" style="top:447.3px;letter-spacing:-0.61px;left:691.6px;">Alias</div>
<div class="t hd" style="top:421.3px;letter-spacing:-0.30px;left:1068.2px;">Properties</div>
<div class="t hd" style="top:448.3px;letter-spacing:-0.36px;left:893.3px;">Foreign keys</div>
<div class="t hd" style="top:448.3px;letter-spacing:-0.43px;left:1092px;">Display</div>
<div class="t hd" style="top:448.3px;letter-spacing:-0.60px;left:1234.9px;">MySQL-column</div>
<div class="t bl" style="top:474.8px;letter-spacing:-0.14px;left:855.3px;">Entity</div>
<div class="t bl" style="top:474.8px;letter-spacing:-0.43px;left:1058.2px;">Element</div>
<div class="t bl" style="top:474.8px;letter-spacing:-0.52px;left:1181.6px;">Type</div>
<div class="t bl" style="top:474.8px;letter-spacing:-1.28px;left:1301.3px;">DEFAULT</div>
<svg style="left:783px;top:461.7px" width="18" height="17"><use href="#i-tray-gray"/></svg>
<svg style="left:820px;top:475.5px" width="18" height="19"><use href="#i-keys"/></svg>
<svg style="left:985px;top:475px" width="19" height="18"><use href="#i-filter"/></svg>
<svg style="left:1023px;top:476.5px" width="18" height="16"><use href="#i-tree-h"/></svg>
<svg style="left:1147px;top:478.5px" width="18" height="13"><use href="#i-shape"/></svg>
<svg style="left:1392.5px;top:460.5px" width="19" height="19"><use href="#i-gtr"/></svg>
<div class="a" style="left:497px;top:497px;width:923px;height:26px;background:#fff;"></div>
<div class="hl" style="left:497px;top:523px;width:923px;background:#e6e6e6"></div>
<div class="t " style="top:499.15px;letter-spacing:-0.85px;left:504.3px;">Name</div>
<div class="t " style="top:499.15px;letter-spacing:-0.37px;left:691.6px;">name</div>
<svg style="left:783px;top:500.8px" width="18" height="17"><use href="#i-tray-red"/></svg>
<div class="t " style="top:499.15px;letter-spacing:-0.21px;left:1057.7px;">String</div><div class="a" style="left:1057px;top:514px;width:37px;height:1px;background:#333"></div>
<div class="t " style="top:499.15px;letter-spacing:-0.75px;left:1181.6px;">VARCHAR(255)</div><div class="a" style="left:1181px;top:514px;width:93px;height:1px;background:#333"></div>
<div class="a" style="left:1393px;top:501.7px;width:17px;height:12.6px;background:#d0d0d0;"></div>
<div class="a" style="left:497px;top:524px;width:923px;height:26px;background:#f5f5f5;"></div>
<div class="hl" style="left:497px;top:550px;width:923px;background:#e6e6e6"></div>
<div class="t " style="top:526.15px;letter-spacing:-0.73px;left:504.3px;">Species</div>
<div class="t " style="top:526.15px;letter-spacing:-0.41px;left:691.6px;">speciesId</div>
<svg style="left:783px;top:527.8px" width="18" height="17"><use href="#i-tray-red"/></svg>
<svg style="left:823.5px;top:527.9px" width="13" height="17"><use href="#i-key"/></svg>
<div class="t " style="top:526.15px;letter-spacing:-0.73px;left:855.3px;">Species</div><div class="a" style="left:855px;top:541px;width:46px;height:1px;background:#333"></div><div class="a" style="left:855px;top:543px;width:46px;height:1px;background:repeating-linear-gradient(90deg,#333 0 1px,transparent 1px 2px)"></div>
<svg style="left:1023px;top:528.5px" width="18" height="16"><use href="#i-tree-g"/></svg>
<div class="t " style="top:526.15px;letter-spacing:-0.66px;left:1057.7px;">Combo</div><div class="a" style="left:1057px;top:541px;width:44px;height:1px;background:#333"></div>
<div class="t " style="top:526.15px;letter-spacing:0.20px;left:1181.6px;">INT(11)</div><div class="a" style="left:1181px;top:541px;width:49px;height:1px;background:#333"></div>
<div class="t " style="top:526.15px;letter-spacing:-0.30px;left:1301.8px;">0</div>
<div class="a" style="left:1393px;top:528.7px;width:17px;height:12.6px;background:#d0d0d0;"></div>
<div class="a" style="left:497px;top:551px;width:923px;height:26px;background:#fff;"></div>
<div class="hl" style="left:497px;top:577px;width:923px;background:#e6e6e6"></div>
<div class="t " style="top:554.15px;letter-spacing:-0.66px;left:504.3px;">Gender</div>
<div class="t " style="top:554.15px;letter-spacing:-0.32px;left:691.6px;">gender</div>
<svg style="left:783px;top:554.8px" width="18" height="17"><use href="#i-tray"/></svg>
<svg style="left:823.5px;top:554.9px" width="13" height="17"><use href="#i-key"/></svg>
<div class="t " style="top:554.15px;letter-spacing:-0.26px;left:855.3px;">Enumerated value</div><div class="a" style="left:855px;top:569px;width:111px;height:1px;background:#333"></div><div class="a" style="left:855px;top:571px;width:111px;height:1px;background:repeating-linear-gradient(90deg,#333 0 1px,transparent 1px 2px)"></div>
<svg style="left:1023px;top:555.5px" width="18" height="16"><use href="#i-tree-g"/></svg>
<div class="t " style="top:554.15px;letter-spacing:-0.66px;left:1057.7px;">Combo</div><div class="a" style="left:1057px;top:569px;width:44px;height:1px;background:#333"></div>
<div class="t " style="top:554.15px;letter-spacing:-1.40px;left:1181.6px;">ENUM</div><div class="a" style="left:1181px;top:569px;width:37px;height:1px;background:#333"></div>
<div class="t " style="top:554.15px;letter-spacing:-0.30px;left:1301.8px;">-</div>
<div class="a" style="left:1393px;top:555.7px;width:17px;height:12.6px;background:#d0d0d0;"></div>
<div class="a" style="left:497px;top:578px;width:923px;height:26px;background:#f5f5f5;"></div>
<div class="hl" style="left:497px;top:604px;width:923px;background:#e6e6e6"></div>
<div class="t " style="top:581.15px;letter-spacing:-0.07px;left:504.3px;">Birth date</div>
<div class="t " style="top:581.15px;letter-spacing:-0.05px;left:691.6px;">birthDate</div>
<svg style="left:783px;top:581.8px" width="18" height="17"><use href="#i-tray"/></svg>
<div class="a" style="left:820px;top:583.5px;width:18px;height:14px;background:#fff;"></div>
<div class="a" style="left:1022.5px;top:583.5px;width:17.5px;height:14px;background:#fff;"></div>
<div class="t " style="top:581.15px;letter-spacing:-0.20px;left:1057.7px;">Date picker</div><div class="a" style="left:1057px;top:596px;width:70px;height:1px;background:#333"></div>
<div class="t " style="top:581.15px;letter-spacing:-1.40px;left:1181.6px;">DATE</div><div class="a" style="left:1181px;top:596px;width:33px;height:1px;background:#333"></div>
<div class="t " style="top:581.15px;letter-spacing:-0.26px;left:1301.8px;">0000-00-00</div>
<div class="a" style="left:1393px;top:582.7px;width:17px;height:12.6px;background:#d0d0d0;"></div>
<div class="a" style="left:497px;top:605px;width:923px;height:27px;background:#e4fbe0;"></div>
<div class="hl" style="left:497px;top:632px;width:923px;background:#e6e6e6"></div>
<div class="t " style="top:608.15px;letter-spacing:-0.52px;left:504.3px;">Enclosure</div>
<div class="t " style="top:608.15px;letter-spacing:-0.25px;left:691.6px;">enclosureId</div>
<svg style="left:783px;top:609.3px" width="18" height="17"><use href="#i-tray-red"/></svg>
<svg style="left:823.5px;top:609.4px" width="13" height="17"><use href="#i-key"/></svg>
<div class="t " style="top:608.15px;letter-spacing:-0.52px;left:855.3px;">Enclosure</div><div class="a" style="left:855px;top:623px;width:59px;height:1px;background:#333"></div><div class="a" style="left:855px;top:625px;width:59px;height:1px;background:repeating-linear-gradient(90deg,#333 0 1px,transparent 1px 2px)"></div>
<svg style="left:1023px;top:610.0px" width="18" height="16"><use href="#i-tree-r"/></svg>
<div class="t " style="top:608.15px;letter-spacing:-0.66px;left:1057.7px;">Combo</div><div class="a" style="left:1057px;top:623px;width:44px;height:1px;background:#333"></div>
<div class="t " style="top:608.15px;letter-spacing:0.20px;left:1181.6px;">INT(11)</div><div class="a" style="left:1181px;top:623px;width:49px;height:1px;background:#333"></div>
<div class="t " style="top:608.15px;letter-spacing:-0.30px;left:1301.8px;">0</div>
<div class="a" style="left:1393px;top:609.7px;width:17px;height:12.6px;background:#d0d0d0;"></div>
<div class="a" style="left:497px;top:633px;width:923px;height:26px;background:#f5f5f5;"></div>
<div class="hl" style="left:497px;top:659px;width:923px;background:#e6e6e6"></div>
<div class="t " style="top:635.15px;letter-spacing:-0.17px;left:504.3px;">Diet</div>
<div class="t " style="top:635.15px;letter-spacing:0.07px;left:691.6px;">dietId</div>
<svg style="left:783px;top:636.8px" width="18" height="17"><use href="#i-tray"/></svg>
<svg style="left:823.5px;top:636.9px" width="13" height="17"><use href="#i-key"/></svg>
<div class="t " style="top:635.15px;letter-spacing:-0.17px;left:855.3px;">Diet</div><div class="a" style="left:855px;top:650px;width:25px;height:1px;background:#333"></div><div class="a" style="left:855px;top:652px;width:25px;height:1px;background:repeating-linear-gradient(90deg,#333 0 1px,transparent 1px 2px)"></div>
<svg style="left:1023px;top:637.5px" width="18" height="16"><use href="#i-tree-r"/></svg>
<div class="t " style="top:635.15px;letter-spacing:-0.66px;left:1057.7px;">Combo</div><div class="a" style="left:1057px;top:650px;width:44px;height:1px;background:#333"></div>
<div class="t " style="top:635.15px;letter-spacing:0.20px;left:1181.6px;">INT(11)</div><div class="a" style="left:1181px;top:650px;width:49px;height:1px;background:#333"></div>
<div class="t " style="top:635.15px;letter-spacing:-0.30px;left:1301.8px;">0</div>
<div class="a" style="left:1393px;top:637.7px;width:17px;height:12.6px;background:#d0d0d0;"></div>
<div class="a" style="left:497px;top:660px;width:923px;height:26px;background:#fff;"></div>
<div class="hl" style="left:497px;top:686px;width:923px;background:#e6e6e6"></div>
<div class="t " style="top:663.15px;letter-spacing:-0.57px;left:504.3px;">Notes</div>
<div class="t " style="top:663.15px;letter-spacing:-0.29px;left:691.6px;">notes</div>
<svg style="left:783px;top:663.8px" width="18" height="17"><use href="#i-tray"/></svg>
<div class="t " style="top:663.15px;letter-spacing:-0.22px;left:1057.7px;">Text</div><div class="a" style="left:1057px;top:678px;width:26px;height:1px;background:#333"></div>
<div class="t " style="top:663.15px;letter-spacing:-1.40px;left:1181.6px;">TEXT</div><div class="a" style="left:1181px;top:678px;width:32px;height:1px;background:#333"></div>
<div class="a" style="left:1393px;top:664.7px;width:17px;height:12.6px;background:#d0d0d0;"></div>
<div class="a" style="left:684px;top:606px;width:89px;height:26px;border:1px dotted #2a2ad0"></div>
<div class="a" style="left:497px;top:738px;width:923px;height:31px;background:#efefef;border-top:1px solid #d0d0d0"></div>
<svg style="left:503.5px;top:747px" width="13" height="15"><use href="#i-first"/></svg>
<svg style="left:532.5px;top:747px" width="9" height="15"><use href="#i-prev"/></svg>
<div class="vl" style="left:554px;top:747px;height:16px"></div>
<div class="t " style="top:745.8px;letter-spacing:-1.23px;color:#444;left:565.4px;">Page</div>
<div class="a" style="left:608px;top:743.5px;width:62px;height:22px;background:#fff;border:1px solid #c6c6c6"></div>
<div class="t " style="top:745.8px;letter-spacing:-0.45px;color:#000;left:612.5px;">1</div>
<div class="t " style="top:745.8px;letter-spacing:0.08px;color:#444;left:677.4px;">of 1</div>
<div class="vl" style="left:712px;top:747px;height:16px"></div>
<svg style="left:725px;top:747px" width="9" height="15"><use href="#i-next"/></svg>
<svg style="left:749.5px;top:747px" width="13" height="15"><use href="#i-last"/></svg>
<div class="vl" style="left:773px;top:747px;height:16px"></div>
<svg style="left:781px;top:746px" width="18" height="18"><use href="#i-refresh"/></svg>
<div class="vl" style="left:807px;top:747px;height:16px"></div>
<svg style="left:814.9px;top:747.6px" width="18" height="16"><use href="#i-excel"/></svg>
<svg style="left:842.2px;top:747.5px" width="17" height="16"><use href="#i-flag"/></svg>
<div class="t " style="top:745.8px;letter-spacing:-0.06px;color:#444;left:1284px;">Displaying 1 - 7 of 7</div>
<div class="a" style="left:1047px;top:643px;width:154.5px;height:30px;background:#7f7f7f;box-shadow:2px 2px 5px rgba(0,0,0,.4)"></div>
<div class="t wt" style="top:647.6px;letter-spacing:-1.00px;left:1055px;">ON DELETE: CASCADE</div>
<svg style="left:1027px;top:619.500px" width="19" height="25" viewBox="0 0 19 25"><path d="M5.200 14.500V2.600Q5.200 1 6.700 1Q8.200 1 8.200 2.600V9.500V8.200Q8.200 7 9.600 7Q11 7 11 8.400V10V9.200Q11 8 12.400 8Q13.800 8 13.800 9.400V11V10.400Q13.800 9.300 15.100 9.300Q16.500 9.300 16.500 10.800V16.500Q16.500 20 14.500 23.800H6.200Q4.500 20.500 1.500 16.500Q0.500 14.800 1.800 14Q3 13.300 4 14.500Z" fill="#fff" stroke="#000" stroke-width="1.200" stroke-linejoin="round"/><path d="M8.300 14V18.500M11 14V18.500M13.700 14V18.500" stroke="#000" stroke-width="1"/></svg>
<div class="a" style="left:12px;top:853.5px;width:375px;height:27.5px;background:rgba(81,140,188,.71);"></div>
<div class="t wt" style="top:858.7px;font-size:15.5px;letter-spacing:-0.28px;left:174.2px;text-shadow:0 0 .6px #fff;">Hide all</div>
<div class="a" style="left:12px;top:883px;width:375px;height:28px;background:rgba(81,140,188,.71);"></div>
<div class="t wt" style="top:888.7px;font-size:15.5px;letter-spacing:-0.36px;left:16.4px;text-shadow:0 0 .6px #fff;">Connected in 690 ms</div>
<svg style="left:372px;top:889px" width="10" height="9"><path d="M1 1L9 8M9 1L1 8" stroke="#fff" stroke-width="2.400"/></svg>
<div class="a" style="left:12px;top:913.5px;width:375px;height:27.5px;background:rgba(81,140,188,.71);"></div>
<div class="t wt" style="top:918.7px;font-size:15.5px;letter-spacing:-0.41px;left:16.4px;text-shadow:0 0 .6px #fff;">Preparing background process</div>
<svg style="left:372px;top:919px" width="10" height="9"><path d="M1 1L9 8M9 1L1 8" stroke="#fff" stroke-width="2.400"/></svg>
<div class="a" style="left:12px;top:943.5px;width:375px;height:27.5px;background:rgba(81,140,188,.71);"></div>
<div class="t wt" style="top:948.7px;font-size:15.5px;letter-spacing:-0.14px;left:16.4px;text-shadow:0 0 .6px #fff;">Getting app design from AI model - done in 00:49</div>
<svg style="left:372px;top:949px" width="10" height="9"><path d="M1 1L9 8M9 1L1 8" stroke="#fff" stroke-width="2.400"/></svg>
<div class="a" style="left:12px;top:973.5px;width:375px;height:34.5px;background:rgba(81,140,188,.71);"></div>
<div class="t wt" style="top:978.7px;font-size:15.5px;letter-spacing:-0.07px;left:16.4px;text-shadow:0 0 .6px #fff;">Importing app design: 61%</div>
<svg style="left:372px;top:979px" width="10" height="9"><path d="M1 1L9 8M9 1L1 8" stroke="#fff" stroke-width="2.400"/></svg>
<div class="a" style="left:17px;top:1000px;width:365px;height:2px;background:rgba(255,255,255,.35);"></div>
<div class="a" style="left:17px;top:1000px;width:221px;height:2px;background:#fff;"></div>
<!-- taskbar -->
<div class="a" id="task" style="left:0;top:1019px;width:1917px;height:58px;background:linear-gradient(90deg,#26262f 0px,#2a2629 70px,#2c2820 140px,#2d2b17 215px,#28301c 290px,#1f2d26 370px,#192c2e 450px,#172c2e 1000px,#182f2e 1300px,#192f2b 1450px,#1c2d27 1560px,#212820 1650px,#25241d 1720px,#24211d 1820px,#211f1d 1917px);letter-spacing:0"></div>
<!-- windows -->
<svg style="left:642px;top:1034.500px" width="29" height="29"><defs><linearGradient id="wg" x1="0" y1="0" x2="1" y2="1"><stop offset="0" stop-color="#6fd6fb"/><stop offset="1" stop-color="#1d9fe8"/></linearGradient></defs><rect x="0" y="0" width="13.700" height="13.700" fill="url(#wg)"/><rect x="15.300" y="0" width="13.700" height="13.700" fill="url(#wg)"/><rect x="0" y="15.300" width="13.700" height="13.700" fill="url(#wg)"/><rect x="15.300" y="15.300" width="13.700" height="13.700" fill="url(#wg)"/></svg>
<!-- chrome -->
<div class="a" style="left:688px;top:1024px;width:50px;height:49px;border-radius:5px;background:rgba(255,255,255,.07);border:1px solid rgba(255,255,255,.06)"></div>
<svg style="left:698.500px;top:1034px" width="29" height="29" viewBox="-14.500 -14.500 29 29"><circle r="14.500" fill="#fff"/><path d="M0 0L-12.560 -7.250A14.500 14.500 0 0 1 12.560 -7.250Z" fill="#ea4335"/><path d="M0 0L12.560 -7.250A14.500 14.500 0 0 1 0 14.500Z" fill="#fbbc04"/><path d="M0 0L0 14.500A14.500 14.500 0 0 1 -12.560 -7.250Z" fill="#34a853"/><path d="M-12.560 -7.250A14.500 14.500 0 0 1 12.560 -7.250L0 -7.250Z" fill="#ea4335"/><path d="M12.560 -7.250H0L6.280 3.630L0 14.500A14.500 14.500 0 0 0 12.560 -7.250Z" fill="#fbbc04"/><path d="M-6.280 3.630L-12.560 -7.250A14.500 14.500 0 0 0 0 14.500L6.280 3.630Z" fill="#34a853"/><circle r="6.700" fill="#fff"/><circle r="5.300" fill="#4285f4"/></svg>
<div class="a" style="left:703px;top:1069.500px;width:20px;height:3.500px;border-radius:2px;background:#4cc2ff"></div>
<!-- blue terminal -->
<svg style="left:752.500px;top:1034px" width="29" height="28" viewBox="0 0 29 28"><rect x=".5" y=".5" width="28" height="23.500" fill="#0a12c4" stroke="#25d8f0" stroke-width="1.200"/><path d="M10 1V24M15 1V24M24 1V24" stroke="#25d8f0" stroke-width="1"/><path d="M3 3H8M11.500 3H13.500M17 3H22M25.500 3H27" stroke="#e8c840" stroke-width="1.200"/><path d="M3 6H8M3 8.500H8M3 11H8M3 13.500H7M17 6H22M17 8.500H21M11.500 6H13.500M11.500 9H13.500M25.500 6H27M25.500 9H27M3 20.500H8M11.500 20.500H13.500M17 20.500H22M25.500 20.500H27" stroke="#5a8cf8" stroke-width="1.200"/><path d="M1 26.500H28" stroke="#18b8b0" stroke-width="1.800" stroke-dasharray="3.500 1.200"/></svg>
<!-- slack -->
<svg style="left:808px;top:1034px" width="29" height="29" viewBox="0 0 29 29"><circle cx="14.500" cy="14.500" r="14.500" fill="#f4f4f4"/><g stroke-width="3.400" stroke-linecap="round"><path d="M11.800 6.500V11.500" stroke="#36c5f0"/><path d="M6.500 11.800H11" stroke="#36c5f0" opacity=".9"/><path d="M17.500 6.500V11" stroke="#2eb67d"/><path d="M17.800 11.800H22.500" stroke="#2eb67d" opacity=".9"/><path d="M17.200 17.500V22.500" stroke="#ecb22e"/><path d="M18 17.200H22.500" stroke="#ecb22e" opacity=".9"/><path d="M11.500 18V22.500" stroke="#e01e5a"/><path d="M6.500 17.200H11.200" stroke="#e01e5a" opacity=".9"/></g></svg>
<!-- phpstorm -->
<svg style="left:863px;top:1033px" width="30" height="31" viewBox="0 0 30 31"><path d="M2 6L12 1L22 3L29 12L26 24L17 30L6 27L0 16Z" fill="#b24ce8"/><path d="M0 16L8 4L14 10L6 27Z" fill="#fc3c86"/><path d="M17 30L29 12L26 24Z" fill="#7a5cf0"/><rect x="6" y="6" width="17" height="17" fill="#000"/><text x="7.300" y="16.300" font-family="Liberation Sans, sans-serif" font-weight="bold" font-size="9.500" fill="#fff" letter-spacing="0">PS</text><path d="M8 20.500H14" stroke="#fff" stroke-width="1.400"/></svg>
<!-- dolphin -->
<svg style="left:919px;top:1033px" width="29" height="31" viewBox="0 0 29 31"><path d="M1.600 15.700Q4 11 7.500 9Q11 5.500 14.200 4.900L15.800 1Q18 4 22.500 7.400Q26.500 11.500 25.800 16Q25 21 23.300 24Q22 27.500 19.200 30L16.700 28.200Q19 25 17.500 21.500Q16.500 19.500 13.300 19.900Q15 18 15.800 16.500Q12 15.500 9.200 15.900Q6 17 4.200 16.500Z" fill="#3f92e6" stroke="#2f7fd4" stroke-width=".7" stroke-linejoin="round"/><circle cx="9.500" cy="12.300" r=".8" fill="#15304a"/></svg>
<!-- winscp -->
<svg style="left:972px;top:1033px" width="32" height="31" viewBox="0 0 32 31"><path d="M11 14V10.500A4.500 4.500 0 0 1 20 10.500V14" fill="none" stroke="#d4d4d4" stroke-width="2.400"/><rect x="7.500" y="13.500" width="15" height="11.500" rx="1.500" fill="#c4c4c4" stroke="#9a9a9a" stroke-width=".8"/><path d="M.5 .8H12.500L8.800 4.500L12.500 8.200L8.200 12.500L4.500 8.800L.8 12.500Z" fill="#2aa2f0"/><path d="M31 30.700H19L22.700 27L18.500 22.800L22.800 18.500L27 22.700L30.700 19Z" fill="#52c83c"/></svg>
<!-- photoshop -->
<svg style="left:1030px;top:1035px" width="27" height="26" viewBox="0 0 27 26"><rect x="1" y="1" width="25" height="24" rx="3.500" fill="#061e2e" stroke="#31c5f0" stroke-width="1.600"/><text x="5.200" y="18.500" font-family="Liberation Sans, sans-serif" font-weight="bold" font-size="13.500" fill="#d2efff" letter-spacing="-.3">Ps</text></svg>
<!-- git -->
<svg style="left:1082px;top:1033px" width="32" height="32" viewBox="0 0 32 32"><g transform="rotate(45 16 16)"><rect x="5.500" y="5.500" width="10.500" height="10.500" rx="1.500" fill="#f07b78"/><rect x="16" y="5.500" width="10.500" height="10.500" rx="1.500" fill="#80cf6c"/><rect x="5.500" y="16" width="10.500" height="10.500" rx="1.500" fill="#7ba8f2"/><rect x="16" y="16" width="10.500" height="10.500" rx="1.500" fill="#f5da75"/></g><path d="M13 8L21 16M16 11V22" stroke="#1a1a1a" stroke-width="2.300"/><circle cx="16" cy="11" r="2" fill="#222"/><circle cx="21" cy="16" r="2" fill="#222"/><circle cx="16" cy="22" r="2" fill="#222"/></svg>
<!-- calculator -->
<svg style="left:1140px;top:1033px" width="25" height="31" viewBox="0 0 25 31"><rect x=".5" y=".5" width="24" height="30" rx="2.500" fill="#6e7f8e" stroke="#5a6a78"/><rect x="3.500" y="3.500" width="18" height="6" fill="#46c8f2"/><g fill="#d5dbe0"><rect x="3.500" y="12" width="5" height="4.500"/><rect x="10" y="12" width="5" height="4.500"/><rect x="3.500" y="18" width="5" height="4.500"/><rect x="10" y="18" width="5" height="4.500"/><rect x="3.500" y="24" width="5" height="4.500"/><rect x="10" y="24" width="5" height="4.500"/><rect x="16.500" y="12" width="5" height="4.500"/></g><rect x="16.500" y="18" width="5" height="10.500" fill="#1a5fb0"/></svg>
<!-- monitor -->
<svg style="left:1192px;top:1036px" width="31" height="26" viewBox="0 0 31 26"><rect x="1" y="1.500" width="29" height="17.500" rx=".5" fill="#fff" stroke="#909090" stroke-width="1.800"/><path d="M12 8V10.500M19 8V10.500" stroke="#555" stroke-width="1.300"/><path d="M12 13Q15.500 15.500 19 13" fill="none" stroke="#555" stroke-width="1.100"/><rect x="13" y="20" width="5" height="3" fill="#bdbdbd"/><rect x="8" y="23" width="15" height="2.500" rx="1" fill="#d0d0d0"/></svg>
<div class="a" style="left:1204px;top:1069.500px;width:7px;height:3.500px;border-radius:2px;background:#9a9a9a"></div>
<!-- putty -->
<svg style="left:1248px;top:1033px" width="30" height="31" viewBox="0 0 30 31"><rect x="13" y="1" width="14" height="11" fill="#d8d8d8" stroke="#777" stroke-width=".8"/><rect x="15" y="3" width="10" height="7" fill="#1a2fc0"/><rect x="16" y="12.500" width="8" height="2" fill="#aaa"/><rect x="12" y="14.500" width="17" height="3" fill="#e0e0e0" stroke="#777" stroke-width=".6"/><rect x="2" y="14" width="14" height="11" fill="#d8d8d8" stroke="#777" stroke-width=".8"/><rect x="4" y="16" width="10" height="7" fill="#1a2fc0"/><rect x="5" y="25.500" width="8" height="2" fill="#aaa"/><rect x="1" y="27.500" width="17" height="3" fill="#e0e0e0" stroke="#777" stroke-width=".6"/><path d="M22 4L10 15H16L8 25L22 13H15.500Z" fill="#ffe81a" stroke="#222" stroke-width=".9" stroke-linejoin="round"/></svg>
<div class="a" style="left:1259px;top:1069.500px;width:7px;height:3.500px;border-radius:2px;background:#9a9a9a"></div>
<!-- tray -->
<svg style="left:1601px;top:1043px" width="15" height="10"><path d="M1.500 8.500L7.500 2.500L13.500 8.500" fill="none" stroke="#fff" stroke-width="1.700"/></svg>
<div class="t wt" style="left:1641.500px;top:1040px;font-size:14.500px;letter-spacing:0">ENG</div>
<svg style="left:1693px;top:1039px" width="21" height="17" viewBox="0 0 21 17"><path d="M1 6Q10.500 -3 20 6" fill="none" stroke="#fff" stroke-width="1.500"/><path d="M4 9.300Q10.500 3 17 9.300" fill="none" stroke="#fff" stroke-width="1.500"/><path d="M7 12.500Q10.500 9 14 12.500" fill="none" stroke="#fff" stroke-width="1.500"/><circle cx="10.500" cy="15" r="1.400" fill="#fff"/></svg>
<svg style="left:1722px;top:1039px" width="22" height="18" viewBox="0 0 22 18"><path d="M1 6.500H4.500L9.500 2V16L4.500 11.500H1Z" fill="none" stroke="#fff" stroke-width="1.400" stroke-linejoin="round"/><path d="M12.500 6Q14.500 9 12.500 12" fill="none" stroke="#fff" stroke-width="1.300"/><path d="M15.500 3.500Q19 9 15.500 14.500" fill="none" stroke="#8a8a8a" stroke-width="1.300"/><path d="M18.500 1.500Q23 9 18.500 16.500" fill="none" stroke="#666" stroke-width="1.300"/></svg>
<svg style="left:1752px;top:1039px" width="22" height="17" viewBox="0 0 22 17"><rect x="2" y="5" width="16.500" height="10.500" rx="2.500" fill="none" stroke="#fff" stroke-width="1.500"/><rect x="4" y="7" width="12.500" height="6.500" rx="1" fill="#fff"/><path d="M19 8V12.500" stroke="#fff" stroke-width="2"/><path d="M5 0L2 5.500H5L3.500 10" fill="none" stroke="#fff" stroke-width="1.400"/></svg>
<div class="t wt" style="left:1765px;width:100px;text-align:right;top:1030px;font-size:14.500px;letter-spacing:0">18:26</div>
<div class="t wt" style="left:1765px;width:100px;text-align:right;top:1050px;font-size:14.500px;letter-spacing:0">19.10.2025</div>
<svg style="left:1876px;top:1039px" width="19" height="21" viewBox="0 0 19 21"><path d="M8 3Q3 4 3 10V13L1 16H15L13 13V10Q13 8 12 6" fill="#fff"/><circle cx="8" cy="18" r="1.800" fill="#fff"/><text x="8" y="9" font-family="Liberation Sans, sans-serif" font-weight="bold" font-size="7" fill="#fff" letter-spacing="0">z</text><text x="12" y="6" font-family="Liberation Sans, sans-serif" font-weight="bold" font-size="8" fill="#fff" letter-spacing="0">Z</text></svg>
</body></html>
